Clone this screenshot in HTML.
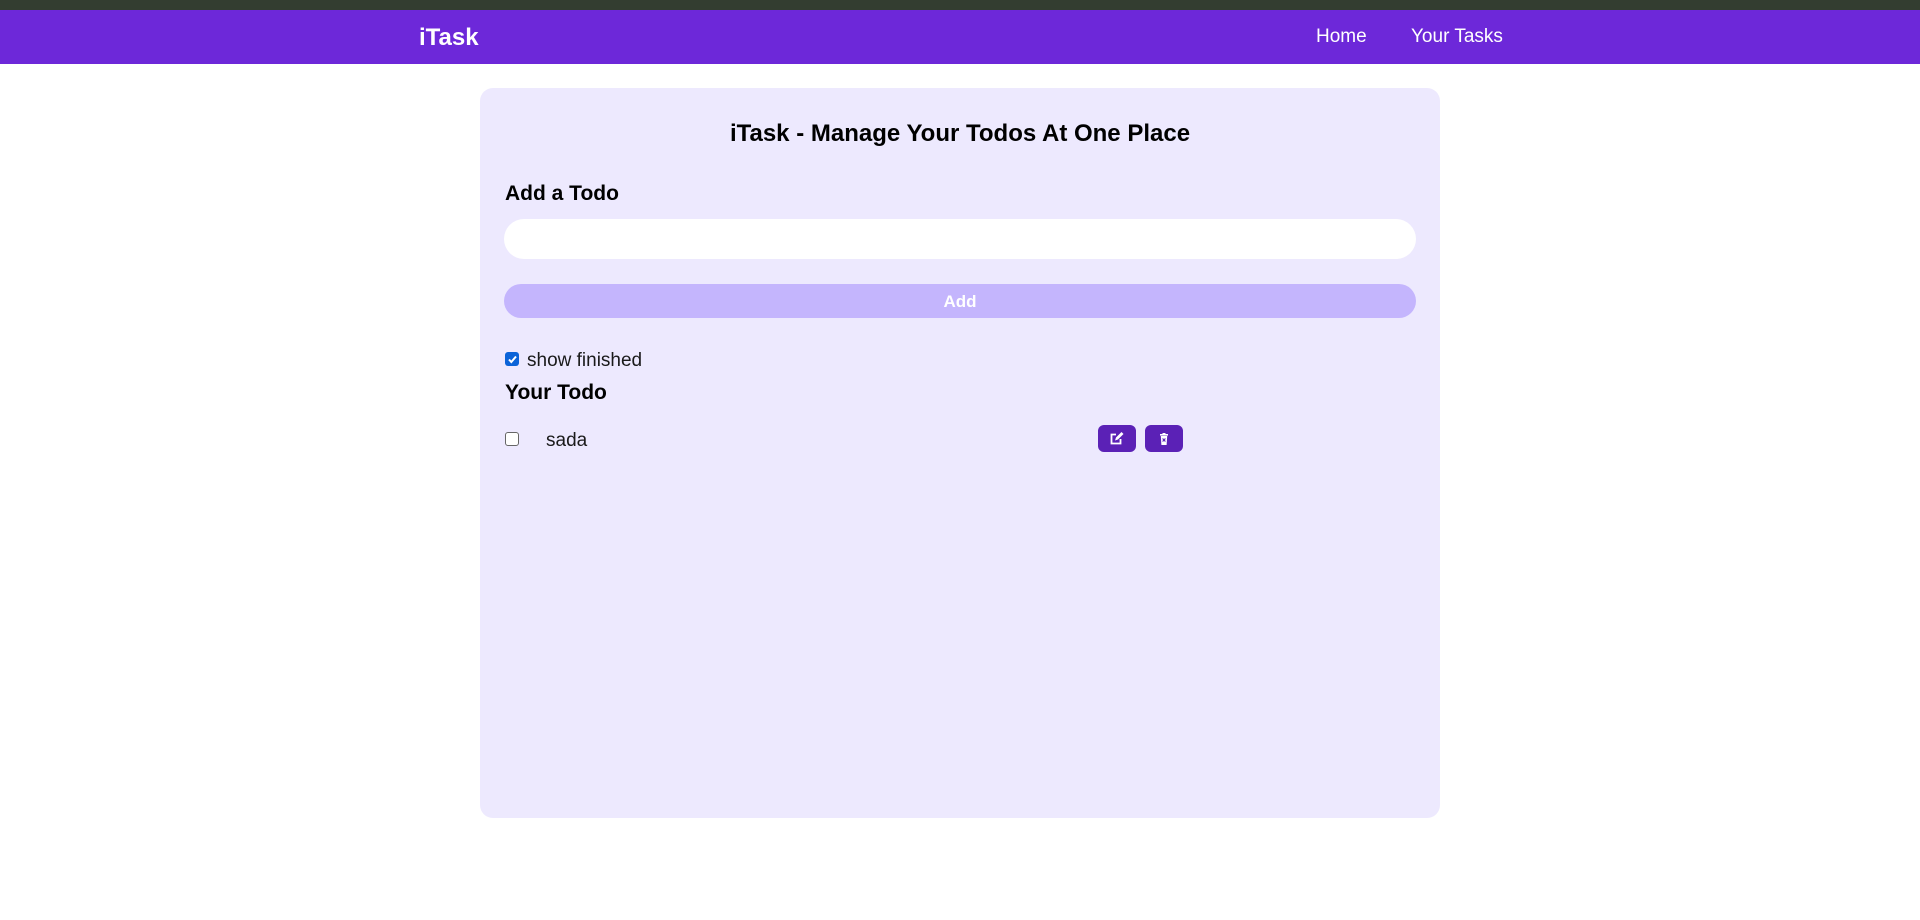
<!DOCTYPE html>
<html><head><meta charset="utf-8"><style>
*{box-sizing:border-box;margin:0;padding:0}
body{width:1920px;height:920px;background:#fff;font-family:"Liberation Sans",sans-serif;position:relative;overflow:hidden;color:#000}
.top{position:absolute;left:0;top:0;width:1920px;height:10px;background:#333d30}
nav{position:absolute;left:0;top:10px;width:1920px;height:54px;background:#6d28d9;color:#fff}
.logo{position:absolute;left:419px;top:14px;font-weight:bold;font-size:24px}
.nl{position:absolute;top:16px;font-size:19px}
.card{position:absolute;left:480px;top:88px;width:960px;height:730px;background:#ede9fe;border-radius:13px}
.abs{position:absolute}
h1{position:absolute;left:480px;width:960px;text-align:center;top:120px;font-size:24px;font-weight:bold}
.h2{font-weight:bold;font-size:21px}
.input{left:504px;top:219px;width:912px;height:40px;background:#fff;border-radius:20px}
.btn{left:504px;top:284px;width:912px;height:34px;background:#c4b5fd;border-radius:17px;color:#fff;font-weight:bold;font-size:17px;text-align:center;line-height:35px}
.cb{width:14px;height:14px;border-radius:3px}
.ib{top:425px;width:38px;height:27px;background:#5b21b6;border-radius:6px;display:flex;align-items:center;justify-content:center}
</style></head><body>
<div class="top"></div>
<nav><div class="logo">iTask</div><div class="nl" style="left:1316px">Home</div><div class="nl" style="left:1411px">Your Tasks</div></nav>
<div class="card"></div>
<h1>iTask - Manage Your Todos At One Place</h1>
<div class="abs h2" style="left:505px;top:182px">Add a Todo</div>
<div class="abs input"></div>
<div class="abs btn">Add</div>
<div class="abs cb" style="left:505px;top:352px;background:#0b63d8;display:flex;align-items:center;justify-content:center"><svg width="11" height="11" viewBox="0 0 11 11"><path d="M2 5.5l2.3 2.5L9 2.5" stroke="#fff" stroke-width="2" fill="none"/></svg></div>
<div class="abs" style="left:527px;top:350px;font-size:19px;color:#1a1a1a">show finished</div>
<div class="abs h2" style="left:505px;top:381px">Your Todo</div>
<div class="abs cb" style="left:505px;top:432px;border:1px solid #666;background:#fff"></div>
<div class="abs" style="left:546px;top:430px;font-size:19px;color:#1a1a1a">sada</div>
<div class="abs ib" style="left:1098px"><svg width="16" height="14" viewBox="0 0 16 14"><path d="M7 2.5H2.5v9h9V7" stroke="#fff" stroke-width="1.8" fill="none"/><path d="M6 8.5l1-3 5.5-5.5 2 2L9 7.5z" fill="#fff"/></svg></div>
<div class="abs ib" style="left:1145px"><svg width="10" height="12" viewBox="0 0 10 12"><rect x="1" y="1" width="8" height="1.6" fill="#fff"/><rect x="3.5" y="0" width="3" height="1.5" fill="#fff"/><path d="M1.8 3h6.4l-.6 9H2.4z" fill="#fff"/><path d="M3.6 5.5l2.8 3M6.4 5.5l-2.8 3" stroke="#5b21b6" stroke-width="1.1"/></svg></div>
</body></html>
